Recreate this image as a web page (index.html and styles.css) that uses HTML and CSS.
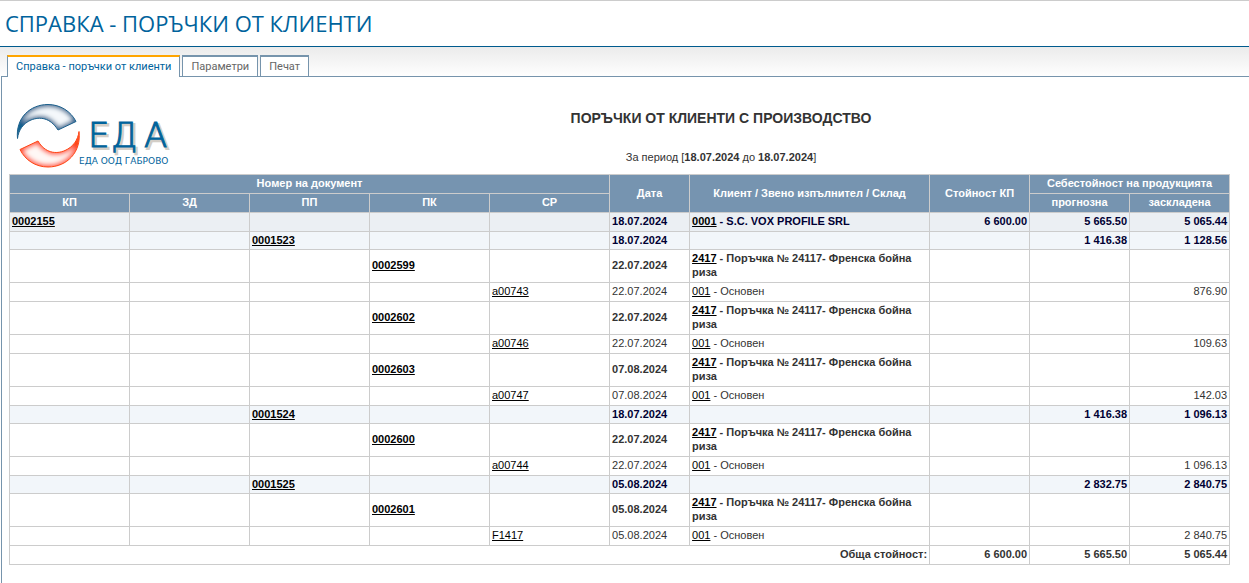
FILE: index.html
```html
<!DOCTYPE html>
<html lang="bg">
<head>
<meta charset="utf-8">
<title>Справка - поръчки от клиенти</title>
<link rel="stylesheet" href="styles.css">
</head>
<body>
<header class="page-header"><h1 class="page-title">СПРАВКА - ПОРЪЧКИ ОТ КЛИЕНТИ</h1></header>
<main class="workspace">
<nav class="tabs">
<button class="tab tab-active" type="button">Справка - поръчки от клиенти</button>
<button class="tab" type="button">Параметри</button>
<button class="tab" type="button">Печат</button>
</nav>
<section class="panel">
<div class="report-head">
<svg class="logo" width="156" height="68" viewBox="16 102 156 68" role="img" aria-label="ЕДА ООД Габрово">
<defs>
<filter id="soft" x="-20%" y="-20%" width="140%" height="140%"><feGaussianBlur stdDeviation="2.2"/></filter>
<clipPath id="top"><path d="M17.500 138.500C15.500 118 30 104.500 48 104.500C60.500 104.500 71 111.500 76 121.500L58 130C50 117.500 40 116.500 31 120C23 123.500 18.500 130 17.500 138.500Z"/></clipPath>
<clipPath id="bottom"><path d="M79 131.500C81.500 152 67 167 48 167C35.500 167 25 160 20 149.500L38 141C45 153 56 154.500 65 150.500C73 147 78 140 79 131.500Z"/></clipPath>
</defs>
<g clip-path="url(#top)"><path d="M17.500 138.500C15.500 118 30 104.500 48 104.500C60.500 104.500 71 111.500 76 121.500L58 130C50 117.500 40 116.500 31 120C23 123.500 18.500 130 17.500 138.500Z" fill="#f4f8fb" stroke="#00598a" stroke-width="5" filter="url(#soft)"/></g>
<path d="M17.500 138.500C15.500 118 30 104.500 48 104.500C60.500 104.500 71 111.500 76 121.500L58 130C50 117.500 40 116.500 31 120C23 123.500 18.500 130 17.500 138.500Z" fill="none" stroke="#1b5f8b" stroke-width="1"/>
<g clip-path="url(#bottom)"><path d="M79 131.500C81.500 152 67 167 48 167C35.500 167 25 160 20 149.500L38 141C45 153 56 154.500 65 150.500C73 147 78 140 79 131.500Z" fill="#fff8f5" stroke="#ff3d0c" stroke-width="5" filter="url(#soft)"/></g>
<path d="M79 131.500C81.500 152 67 167 48 167C35.500 167 25 160 20 149.500L38 141C45 153 56 154.500 65 150.500C73 147 78 140 79 131.500Z" fill="none" stroke="#ff4513" stroke-width="1"/>
<text class="logo-shadow" x="90 113 146" y="149">ЕДА</text>
<text class="logo-name" x="88 111 144" y="147">ЕДА</text>
<text class="logo-sub" x="79" y="164">ЕДА ООД ГАБРОВО</text>
</svg>
<div class="report-titles">
<h2 class="report-title">ПОРЪЧКИ ОТ КЛИЕНТИ С ПРОИЗВОДСТВО</h2>
<p class="period">За период [<b>18.07.2024</b> до <b>18.07.2024</b>]</p>
</div>
</div>
<table class="report">
<colgroup><col class="c-doc" span="5"><col class="c-date"><col class="c-client"><col class="c-sum" span="3"></colgroup>
<thead>
<tr><th colspan="5">Номер на документ</th><th rowspan="2">Дата</th><th rowspan="2">Клиент / Звено изпълнител / Склад</th><th rowspan="2">Стойност КП</th><th colspan="2">Себестойност на продукцията</th></tr>
<tr><th>КП</th><th>ЗД</th><th>ПП</th><th>ПК</th><th>СР</th><th>прогнозна</th><th>заскладена</th></tr>
</thead>
<tbody>
<tr class="order"><td><a href="#">0002155</a></td><td></td><td></td><td></td><td></td><td>18.07.2024</td><td><a href="#">0001</a> - S.C. VOX PROFILE SRL</td><td class="num">6 600.00</td><td class="num">5 665.50</td><td class="num">5 065.44</td></tr>
<tr class="suborder"><td></td><td></td><td><a href="#">0001523</a></td><td></td><td></td><td>18.07.2024</td><td></td><td></td><td class="num">1 416.38</td><td class="num">1 128.56</td></tr>
<tr class="card"><td></td><td></td><td></td><td><a href="#">0002599</a></td><td></td><td>22.07.2024</td><td><a href="#">2417</a> - Поръчка № 24117- Френска бойна риза</td><td></td><td></td><td></td></tr>
<tr><td></td><td></td><td></td><td></td><td><a href="#">a00743</a></td><td>22.07.2024</td><td><a href="#">001</a> - Основен</td><td></td><td></td><td class="num">876.90</td></tr>
<tr class="card"><td></td><td></td><td></td><td><a href="#">0002602</a></td><td></td><td>22.07.2024</td><td><a href="#">2417</a> - Поръчка № 24117- Френска бойна риза</td><td></td><td></td><td></td></tr>
<tr><td></td><td></td><td></td><td></td><td><a href="#">a00746</a></td><td>22.07.2024</td><td><a href="#">001</a> - Основен</td><td></td><td></td><td class="num">109.63</td></tr>
<tr class="card"><td></td><td></td><td></td><td><a href="#">0002603</a></td><td></td><td>07.08.2024</td><td><a href="#">2417</a> - Поръчка № 24117- Френска бойна риза</td><td></td><td></td><td></td></tr>
<tr><td></td><td></td><td></td><td></td><td><a href="#">a00747</a></td><td>07.08.2024</td><td><a href="#">001</a> - Основен</td><td></td><td></td><td class="num">142.03</td></tr>
<tr class="suborder"><td></td><td></td><td><a href="#">0001524</a></td><td></td><td></td><td>18.07.2024</td><td></td><td></td><td class="num">1 416.38</td><td class="num">1 096.13</td></tr>
<tr class="card"><td></td><td></td><td></td><td><a href="#">0002600</a></td><td></td><td>22.07.2024</td><td><a href="#">2417</a> - Поръчка № 24117- Френска бойна риза</td><td></td><td></td><td></td></tr>
<tr><td></td><td></td><td></td><td></td><td><a href="#">a00744</a></td><td>22.07.2024</td><td><a href="#">001</a> - Основен</td><td></td><td></td><td class="num">1 096.13</td></tr>
<tr class="suborder"><td></td><td></td><td><a href="#">0001525</a></td><td></td><td></td><td>05.08.2024</td><td></td><td></td><td class="num">2 832.75</td><td class="num">2 840.75</td></tr>
<tr class="card"><td></td><td></td><td></td><td><a href="#">0002601</a></td><td></td><td>05.08.2024</td><td><a href="#">2417</a> - Поръчка № 24117- Френска бойна риза</td><td></td><td></td><td></td></tr>
<tr><td></td><td></td><td></td><td></td><td><a href="#">F1417</a></td><td>05.08.2024</td><td><a href="#">001</a> - Основен</td><td></td><td></td><td class="num">2 840.75</td></tr>
</tbody>
<tfoot>
<tr><td class="num" colspan="7">Обща стойност:</td><td class="num">6 600.00</td><td class="num">5 665.50</td><td class="num">5 065.44</td></tr>
</tfoot>
</table>
</section>
</main>
</body>
</html>
```
FILE: styles.css
```css
* { box-sizing: border-box; }
html, body { height: 100%; }
body {
  margin: 0;
  display: flex;
  flex-direction: column;
  background: #fff;
  color: #333;
  font: 11px/14px "Liberation Sans", Arial, sans-serif;
}
.page-header {
  border-top: 1px solid #ccc;
  border-bottom: 1px solid #005b8e;
  padding: 8px 5px;
}
.page-title {
  margin: 0;
  color: #00639c;
  font: 400 22px/29px "Open Sans", sans-serif;
}
.workspace {
  flex: 1;
  display: flex;
  flex-direction: column;
  padding-left: 1px;
  background: linear-gradient(#ebebeb, #fff 30px);
}
.tabs {
  display: flex;
  gap: 2px;
  padding: 8px 6px 0;
}
.tab {
  height: 21px;
  padding: 0 8px;
  border: 1px solid #7694ac;
  border-top-width: 2px;
  border-bottom: 0;
  background: #fff;
  color: #666;
  font: 11px/18px Roboto, sans-serif;
}
.tab-active {
  height: 22px;
  margin-bottom: -1px;
  border-top-color: #ffa500;
  color: #00639c;
  z-index: 1;
}
.panel {
  flex: 1;
  border-top: 1px solid #7694ac;
  border-left: 1px solid #7694ac;
  background: #fff;
  padding: 25px 19px 18px 7px;
}
.report-head {
  display: flex;
  padding-bottom: 4px;
}
.logo { margin-left: 7px; flex: none; }
.logo text { font-family: "DejaVu Sans", sans-serif; }
.logo .logo-name, .logo .logo-shadow { font-weight: 200; font-size: 34px; fill: #00639c; }
.logo .logo-name { stroke: #00639c; stroke-width: 1px; }
.logo .logo-shadow { fill: #d3cec7; stroke: #d3cec7; stroke-width: 2px; }
.logo-sub { font-size: 9px; fill: #00639c; }
.report-titles {
  flex: 1;
  padding-left: 40px;
  text-align: center;
}
.report-title {
  margin: 8px 0 24px;
  font-size: 14px;
  line-height: 16px;
}
.period { margin: 0; }
.report {
  width: 100%;
  table-layout: fixed;
  border-collapse: collapse;
}
.c-doc { width: 120px; }
.c-date { width: 80px; }
.c-client { width: 240px; }
.c-sum { width: 100px; }
.report th, .report td {
  height: 19px;
  padding: 1px 2px 3px;
  border: 1px solid #ccc;
}
.report th {
  background: #7694b0;
  color: #fff;
}
.report a { color: #000; }
.num { text-align: right; }
.order, .suborder { color: #003; font-weight: bold; }
.order { background: #ebeff3; }
.suborder { background: #f2f6fa; }
.report .suborder td { height: 18px; padding-bottom: 2px; }
.card, .report tfoot { font-weight: bold; }
```
